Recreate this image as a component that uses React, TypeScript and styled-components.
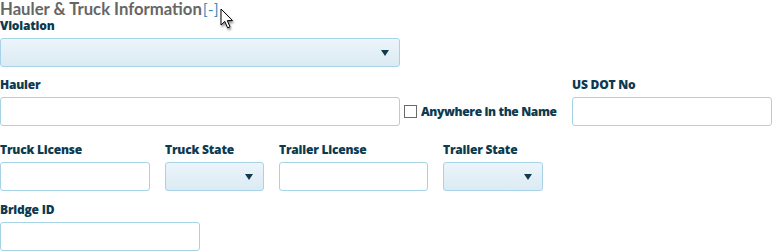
import React from "react";
import styled, { createGlobalStyle } from "styled-components";

const Global = createGlobalStyle`
  html, body { margin: 0; padding: 0; background: #fff; }
  body { font-family: "Open Sans", "Noto Sans", sans-serif; }
  * { box-sizing: border-box; }
`;

const Page = styled.div`
  position: relative;
  width: 772px;
  height: 251px;
  overflow: hidden;
`;

const TitleRow = styled.div`
  display: flex;
  align-items: flex-start;
  height: 18px;
`;

const Title = styled.h2`
  margin: 0;
  font-family: "Lato", "Open Sans", sans-serif;
  font-size: 16.7px;
  line-height: 18px;
  font-weight: 700;
  color: #666666;
`;

const Toggle = styled.a`
  font-family: "Lato", "Open Sans", sans-serif;
  font-size: 16px;
  line-height: 18px;
  color: #3d8fbf;
  text-decoration: none;
  font-weight: 400;
  margin-left: 1px;
`;

const Row = styled.div<{ $top: number }>`
  display: flex;
  align-items: flex-end;
  gap: 15px;
  margin-top: ${(p) => p.$top}px;
`;

const Field = styled.div<{ $w: number; $right?: boolean }>`
  display: flex;
  flex-direction: column;
  flex-shrink: 0;
  width: ${(p) => p.$w}px;
  margin-left: ${(p) => (p.$right ? "auto" : "0")};
`;

const Label = styled.label`
  font-size: 12px;
  line-height: 16px;
  font-weight: 800;
  color: #0c3a50;
  height: 16px;
  margin-bottom: 4px;
  letter-spacing: -0.2px;
  white-space: nowrap;
`;

const TextInput = styled.input`
  width: 100%;
  height: 29px;
  border: 1px solid #a7d3e7;
  border-radius: 3px;
  background: #fff;
  outline: none;
  padding: 0 6px;
`;

const SelectBox = styled.div`
  width: 100%;
  height: 29px;
  border: 1px solid #a7d3e7;
  border-radius: 3px;
  background: linear-gradient(#ecf5fa, #dbeaf3);
  display: flex;
  align-items: center;
  justify-content: flex-end;
  padding-right: 10px;
`;

const Caret = styled.span`
  width: 0;
  height: 0;
  border-left: 4px solid transparent;
  border-right: 4px solid transparent;
  border-top: 6px solid #123a4e;
`;

const CheckWrap = styled.label`
  display: flex;
  align-items: center;
  flex-shrink: 0;
  height: 29px;
  margin-left: -11px;
  font-size: 12px;
  font-weight: 800;
  color: #0c3a50;
  letter-spacing: -0.35px;
  white-space: nowrap;
`;

const Box = styled.span`
  width: 13px;
  height: 13px;
  border: 1px solid #6a6a6a;
  background: #fff;
  margin-right: 4px;
`;

const Cursor = styled.svg`
  position: absolute;
  left: 220px;
  top: 8px;
  filter: drop-shadow(1px 2px 1px rgba(0, 0, 0, 0.45));
`;

function Select() {
  return (
    <SelectBox>
      <Caret />
    </SelectBox>
  );
}

export default function App() {
  return (
    <Page>
      <Global />
      <TitleRow>
        <Title>Hauler &amp; Truck Information</Title>
        <Toggle href="#">[-]</Toggle>
      </TitleRow>
      <Row $top={0}>
        <Field $w={400}>
          <Label>Violation</Label>
          <Select />
        </Field>
      </Row>
      <Row $top={10}>
        <Field $w={400}>
          <Label>Hauler</Label>
          <TextInput />
        </Field>
        <CheckWrap>
          <Box />
          Anywhere in the Name
        </CheckWrap>
        <Field $w={200} $right>
          <Label>US DOT No</Label>
          <TextInput />
        </Field>
      </Row>
      <Row $top={16}>
        <Field $w={150}>
          <Label>Truck License</Label>
          <TextInput />
        </Field>
        <Field $w={99}>
          <Label>Truck State</Label>
          <Select />
        </Field>
        <Field $w={149}>
          <Label>Trailer License</Label>
          <TextInput />
        </Field>
        <Field $w={100}>
          <Label>Trailer State</Label>
          <Select />
        </Field>
      </Row>
      <Row $top={11}>
        <Field $w={200}>
          <Label>Bridge ID</Label>
          <TextInput />
        </Field>
      </Row>
      <Cursor width="14" height="22" viewBox="0 0 14 22">
        <path d="M1 1 L1 17 L4.8 13.4 L7.6 19.8 L10 18.8 L7.3 12.6 L12.5 12.6 Z" fill="#fff" stroke="#000" strokeWidth="1" />
      </Cursor>
    </Page>
  );
}
